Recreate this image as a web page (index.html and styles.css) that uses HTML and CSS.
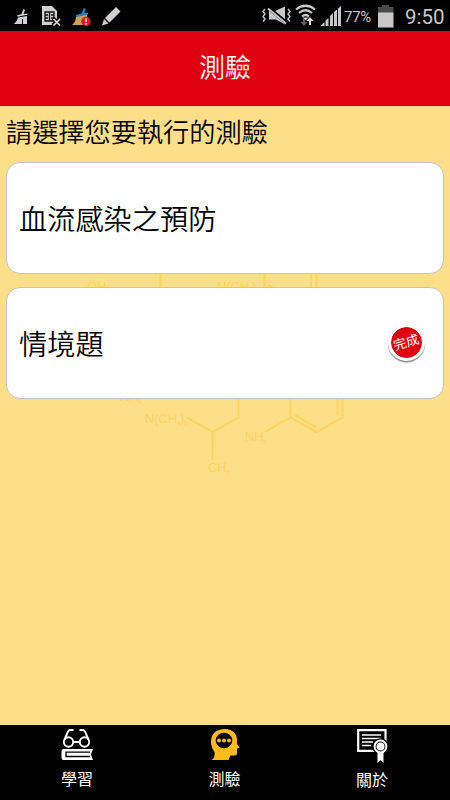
FILE: index.html
```html
<!DOCTYPE html>
<html lang="zh-Hant">
<head>
<meta charset="utf-8">
<title>測驗</title>
<link rel="stylesheet" href="styles.css">
</head>
<body>
<div class="app">
  <div class="status">
    <svg class="status-left" width="125" height="31" viewBox="0 0 125 31">
      <g fill="#d0d0d0">
        <path d="M23.500 9l1.500 1-1.500 4 4-.6v1.400l-10 2-.2-1.600 4-1z"/>
        <path d="M18 17.500l9-1.400V24H14q3-2 4-6.500z"/>
      </g>
      <path d="M22.500 19v5" stroke="#000" stroke-width="1"/>
      <path d="M42 6h10l5 5v14H42z" fill="#d0d0d0"/>
      <path d="M45 12h9v9h-9zM49.500 12v9M45 15h3M51 15h3M45 18h3M51 18h3" fill="none" stroke="#111" stroke-width="1.300"/>
      <path d="M53 18.500l7 7m0-7l-7 7" stroke="#000" stroke-width="4"/>
      <path d="M53.500 19l6.500 6.500m0-6.500l-6.500 6.500" stroke="#ddd" stroke-width="1.700"/>
      <path d="M76 16.500l11-2V25H72q4-3 4-8.500z" fill="#c6a35a"/>
      <path d="M84 8l2 1-1.500 4 3.500-.5v2l-11.500 2.500-.5-2 5.500-1.500z" fill="#2386b5"/>
      <circle cx="86" cy="21.500" r="4.700" fill="#dc1a1f"/>
      <path d="M86 18.500v3.500M86 23v1.500" stroke="#fff" stroke-width="1.500"/>
      <path d="M116 7l4.500 4.500-11 11-4.500-4.500zM104 19l4.500 4.500-6.500 2z" fill="#d0d0d0"/>
    </svg>
    <svg class="status-mid" width="82" height="31" viewBox="260 0 82 31">
      <g fill="none" stroke="#c8c8c8" stroke-width="1.400">
        <path d="M265 9l-2 2.500 2 2.500-2 2.500 2 2.500-2 2.500"/>
        <path d="M288 9l2 2.500-2 2.500 2 2.500-2 2.500 2 2.500"/>
      </g>
      <path d="M269 11h6l10-4.500v18l-9-5h-7z" fill="#c8c8c8"/>
      <path d="M268 7.500l18 15" stroke="#000" stroke-width="3.600"/>
      <path d="M268 8.500l18 15" stroke="#c8c8c8" stroke-width="2"/>
      <g fill="none" stroke="#c8c8c8" stroke-width="2.200">
        <path d="M296 9.500q9.500-7.500 19 0M299 13q6.500-5.500 13 0M302 16.500q3.500-3 7 0"/>
      </g>
      <path d="M302.500 17.500h6l-3 3z" fill="#c8c8c8"/>
      <path d="M303 19v3h2.500l-3.500 4-3.500-4h2.500v-3z" transform="translate(2)" fill="#606060"/>
      <path d="M310 17l3.500 4H311v4h-2v-4h-2.500z" fill="#ddd"/>
      <path d="M320.500 26l4-4v4zM325.500 20.500l3-2.500v8h-3zM330 16l3-3v13h-3zM334 12l3-2.500v16.500h-3zM338 8.500l3-2.500v20h-3z" fill="#c8c8c8"/>
    </svg>
    <span class="percent">77%</span>
    <svg class="battery" width="16" height="23" viewBox="0 0 16 23"><path d="M4 0h7v2h4.500v6H0V2h4z" fill="#4a4a4a"/><path d="M0 7.500h15.500V22.500H0z" fill="#c8c8c8"/></svg>
    <span class="clock">9:50</span>
  </div>
  <header class="title">測驗</header>
  <main class="content">
    <svg class="molecule" width="450" height="619" viewBox="0 106 450 619">
      <g fill="none" stroke="#fdd45e" stroke-width="2">
        <path d="M160.500 270V290M264.500 270V290M268 285l6 3M311 270V290M316.500 270V290"/>
        <path d="M187 417.500L212.500 432L238.500 417.500V390M212.500 432V460M265 432L290.500 417.500L316.500 432L342.500 417.500V390M290.500 417.500V390M295 415.500L316 427M337.500 415V390"/>
      </g>
      <g class="formula">
        <text x="87" y="291">OH</text>
        <text x="217" y="291">N(CH<tspan class="sub" dy="3">3</tspan><tspan dy="-3">)</tspan></text>
        <text x="120" y="400.500">NH<tspan class="sub" dy="2">2</tspan></text>
        <text x="145" y="423">N(CH<tspan class="sub" dy="3">3</tspan><tspan dy="-3">)</tspan><tspan class="sub" dy="3">2</tspan></text>
        <text x="245" y="440.500">NH<tspan class="sub" dy="3">2</tspan></text>
        <text x="208" y="472">CH<tspan class="sub" dy="3">3</tspan></text>
      </g>
    </svg>
    <h1 class="prompt">請選擇您要執行的測驗</h1>
    <div class="list">
      <div class="card"><span>血流感染之預防</span></div>
      <div class="card"><span>情境題</span><div class="badge"><span>完成</span></div></div>
    </div>
  </main>
  <nav class="tabs">
    <div class="tab tab-learn">
      <svg width="36" height="36" viewBox="59 727 36 36">
        <g fill="none" stroke="#fff" stroke-width="1.900">
          <circle cx="68.500" cy="742" r="4.700"/><circle cx="84.500" cy="742" r="4.700"/>
          <path d="M73 742h7M64.500 739.500l3.500-8 1.500-1.500h4M88.500 739.500l-3.500-8-1.500-1.500h-4"/>
        </g>
        <path d="M63.500 749H93L91 754.500L93 760H63.500Q61.500 760 61.500 757.500V751.500Q61.500 749 63.500 749z" fill="#fff"/>
        <path d="M90 752.200H66v4.300H90" fill="none" stroke="#000" stroke-width="1.300"/>
      </svg>
      <span>學習</span>
    </div>
    <div class="tab tab-quiz">
      <svg width="36" height="36" viewBox="207 727 36 36">
        <path d="M225 729c8 0 12 5 12 11v4l2.500 3.500-2.500 1v5q0 2-2.500 2h-4l-2 4.500h-17q4-3 3-8c-2-3-3.500-6-3.500-10 0-8 5-13 14-13z" fill="#fdbd19"/>
        <ellipse cx="224" cy="740.500" rx="8.300" ry="7.800" fill="#000"/>
        <g fill="#fdbd19"><circle cx="219" cy="740.500" r="2"/><circle cx="224" cy="740.500" r="2"/><circle cx="229" cy="740.500" r="2"/></g>
      </svg>
      <span>測驗</span>
    </div>
    <div class="tab tab-about">
      <svg width="36" height="36" viewBox="354 727 36 36">
        <path d="M358.200 730.200h27.300v20.600h-27.300z" fill="none" stroke="#fff" stroke-width="2.200"/>
        <path d="M362 735h19M362 738.500h19M362 742h11M362 745.500h9" stroke="#fff" stroke-width="1.500"/>
        <circle cx="380.500" cy="746.500" r="8.300" fill="#000"/>
        <path d="M377.500 751h6v12l-3-3-3 3z" fill="#fff"/>
        <circle cx="380.500" cy="746.500" r="5.900" fill="#000" stroke="#fff" stroke-width="2"/>
        <circle cx="380.500" cy="746.500" r="4" fill="#fff"/>
      </svg>
      <span class="about-label">關於</span>
    </div>
  </nav>
</div>
</body>
</html>
```
FILE: styles.css
```css
* { box-sizing: border-box; }
body { margin: 0; background: #000; font-family: "Noto Sans CJK TC", sans-serif; font-weight: 350; }
.app { width: 450px; height: 800px; display: flex; flex-direction: column; overflow: hidden; }
.status { height: 31px; display: flex; align-items: center; color: #c8c8c8; font-family: Roboto, sans-serif; background: #000; white-space: nowrap; flex: none; }
.status svg { display: block; flex: none; }
.status-mid { margin-left: 135px; }
.percent { width: 36px; flex: none; padding: 3px 0 0 2px; font-size: 15px; line-height: 30px; font-weight: 400; letter-spacing: -.3px; }
.battery { margin-top: 1px; }
.clock { margin-left: 11px; padding-top: 2px; font-size: 20.500px; line-height: 30px; font-weight: 400; }
.title { height: 75px; flex: none; background: #df0011; color: #fff; font-size: 26px; line-height: 70px; text-align: center; }
.content { position: relative; flex: 1; background: #fdde89; padding: 0 6px; }
.molecule { position: absolute; left: 0; top: 0; }
.formula { font: 12.800px "Liberation Sans", sans-serif; fill: #fdd45e; }
.sub { font-size: 6px; }
.prompt { position: relative; margin: 0; height: 56px; padding-left: 0; font-size: 26.200px; line-height: 51px; font-weight: 350; color: #000; }
.list { position: relative; display: flex; flex-direction: column; gap: 13px; }
.card { height: 112px; width: 438px; background: #fff; border: 1px solid #c2c2ca; border-radius: 14px; display: flex; align-items: center; justify-content: space-between; padding: 0 18px 2px 12px; font-size: 28.200px; color: #000; }
.badge { width: 37px; height: 37px; border-radius: 50%; border: 3px solid #fff; box-shadow: 0 1.500px 1px #888; background: #df0011; background-clip: padding-box; display: flex; align-items: center; justify-content: center; }
.badge span { color: #fff; font-size: 13px; line-height: 20px; font-weight: 400; transform: rotate(-17deg); white-space: nowrap; }
.tabs { height: 75px; flex: none; background: #000; display: flex; justify-content: space-between; padding: 2px 60px 0 59px; color: #fff; }
.tab { width: 36px; display: flex; flex-direction: column; align-items: center; font-size: 16px; line-height: 30px; font-weight: 400; white-space: nowrap; }
.tab svg { display: block; flex: none; }
.about-label { padding-top: 1px; }
```
